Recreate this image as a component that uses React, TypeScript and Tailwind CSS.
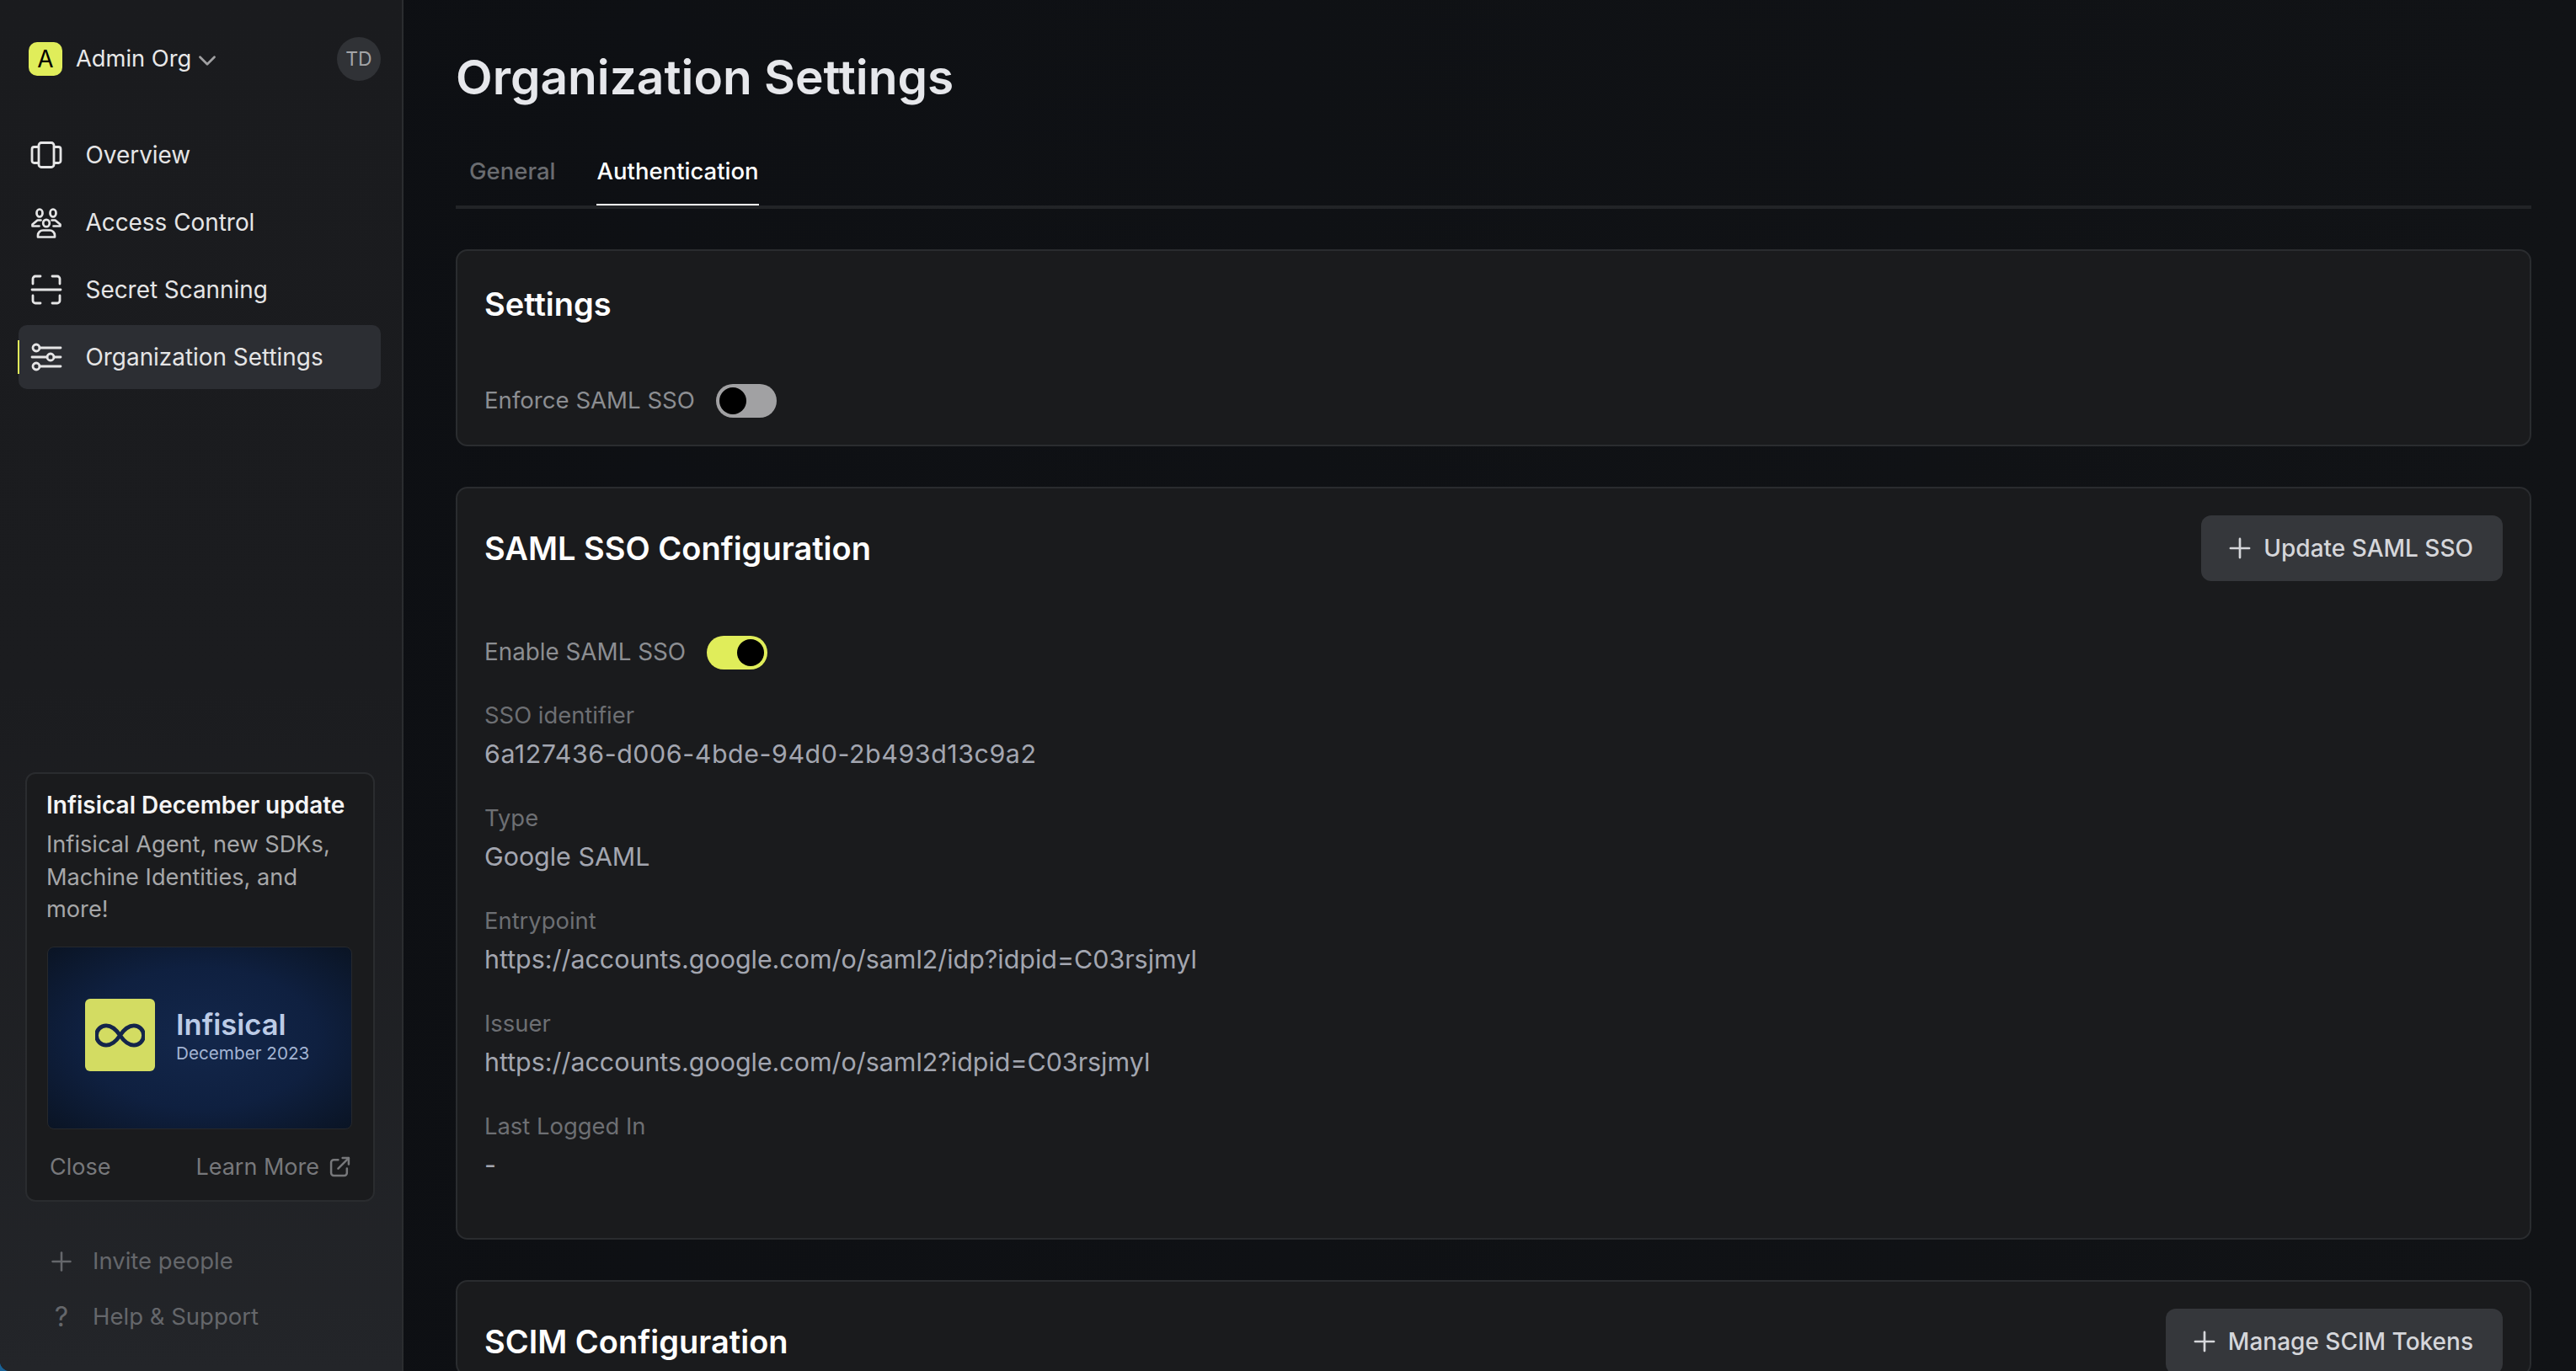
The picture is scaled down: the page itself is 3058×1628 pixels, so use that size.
import { Plus, ChevronDown } from "lucide-react";
import type { ReactNode } from "react";

function OverviewIcon() {
  return (
    <svg viewBox="0 0 38 38" className="w-[38px] h-[38px]" fill="none" stroke="currentColor" strokeWidth="2.800" strokeLinejoin="round">
      <rect x="10" y="4.500" width="18" height="29" rx="3" />
      <path d="M10 9.500H4.500a2.500 2.500 0 0 0-2.500 2.500v14a2.500 2.500 0 0 0 2.500 2.500H10" />
      <path d="M28 9.500h5.500a2.500 2.500 0 0 1 2.500 2.500v14a2.500 2.500 0 0 1-2.500 2.500H28" />
    </svg>
  );
}

function AccessIcon() {
  return (
    <svg viewBox="0 0 38 38" className="w-[38px] h-[38px]" fill="none" stroke="currentColor" strokeWidth="2.700" strokeLinejoin="round" strokeLinecap="round">
      <ellipse cx="11" cy="8" rx="3.500" ry="4.500" />
      <ellipse cx="27" cy="8" rx="3.500" ry="4.500" />
      <ellipse cx="19" cy="20" rx="3.800" ry="4.200" />
      <path d="M9 36.500v-2a6 6 0 0 1 6-6h8a6 6 0 0 1 6 6v2z" />
      <path d="M12.500 16.500H8.500L2.500 21.500V23.500H10.500" />
      <path d="M25.500 16.500H29.500L35.500 21.500V23.500H27.500" />
    </svg>
  );
}

function ScanIcon() {
  return (
    <svg viewBox="0 0 38 38" className="w-[38px] h-[38px]" fill="none" stroke="currentColor" strokeWidth="2.800" strokeLinecap="round">
      <path d="M3 12V6a3 3 0 0 1 3-3h6" />
      <path d="M26 3h6a3 3 0 0 1 3 3v6" />
      <path d="M3 26v6a3 3 0 0 0 3 3h6" />
      <path d="M26 35h6a3 3 0 0 0 3-3v-6" />
      <path d="M2 19h34" />
    </svg>
  );
}

function SlidersIcon() {
  return (
    <svg viewBox="0 0 38 38" className="w-[38px] h-[38px]" fill="none" stroke="currentColor" strokeWidth="2.800" strokeLinecap="round">
      <circle cx="7" cy="8" r="4" />
      <circle cx="24" cy="19" r="4" />
      <circle cx="7" cy="30" r="4" />
      <path d="M11 8h25M2 19h18M28 19h8M11 30h25" />
    </svg>
  );
}

function ExternalIcon() {
  return (
    <svg viewBox="0 0 24 24" className="w-[25px] h-[25px]" fill="none" stroke="currentColor" strokeWidth="2.400" strokeLinecap="round" strokeLinejoin="round">
      <path d="M10 4H5a3 3 0 0 0-3 3v12a3 3 0 0 0 3 3h12a3 3 0 0 0 3-3v-5" />
      <path d="M15 2h7v7" />
      <path d="M22 2L10 14" />
    </svg>
  );
}

function Toggle({ on }: { on: boolean }) {
  return (
    <div className={`w-[72px] h-[40px] rounded-full flex items-center px-[4px] ${on ? "bg-[#e0ed5a] justify-end" : "bg-[#a1a1a3] justify-start"}`}>
      <div className="w-[32px] h-[32px] rounded-full bg-black" />
    </div>
  );
}

function Field({ label, value, tracking }: { label: string; value: string; tracking?: string }) {
  return (
    <div>
      <div className="h-[40px] leading-[40px] text-[27.400px] text-[#6d6f73]">{label}</div>
      <div className={`mt-[6px] h-[40px] leading-[40px] text-[30.400px] text-[#a3a6b0] ${tracking ?? ""}`}>{value}</div>
    </div>
  );
}

function NavItem({ icon, label, active }: { icon: ReactNode; label: string; active?: boolean }) {
  return (
    <div className={`relative h-[76px] rounded-[10px] flex items-center pl-[14px] text-[#e5e5e6] ${active ? "bg-[#2c2e33]" : ""}`}>
      {active && <div className="absolute left-[-1px] top-[18px] w-[2px] h-[40px] bg-[#e0ed5a]" />}
      {icon}
      <span className="ml-[27.500px] mt-[1px] text-[27.900px]">{label}</span>
    </div>
  );
}

function ActionButton({ label }: { label: string }) {
  return (
    <div className="h-[78px] rounded-[12px] bg-[#35373b] flex items-center pl-[27px] pr-[35px] text-[#d5d6da] font-medium text-[28px]">
      <Plus size={38} strokeWidth={1.700} />
      <span className="ml-[9px]">{label}</span>
    </div>
  );
}

function Card({ children }: { children: ReactNode }) {
  return <div className="rounded-[14px] border-2 border-[#2a2c2f] bg-[#1a1b1d] px-[32px]">{children}</div>;
}

const fields = [
  { label: "SSO identifier", value: "6a127436-d006-4bde-94d0-2b493d13c9a2", tracking: "tracking-[0.550px]" },
  { label: "Type", value: "Google SAML" },
  { label: "Entrypoint", value: "https://accounts.google.com/o/saml2/idp?idpid=C03rsjmyl" },
  { label: "Issuer", value: "https://accounts.google.com/o/saml2?idpid=C03rsjmyl" },
  { label: "Last Logged In", value: "-" },
];

export default function App() {
  return (
    <div className="h-screen bg-[#1a6296] overflow-hidden font-['Inter',sans-serif]">
      <div className="h-full flex rounded-bl-[12px] overflow-hidden bg-gradient-to-r from-[#0d0f13] to-[#111316]">
        <aside className="w-[479px] shrink-0 border-r-2 border-[#2b2d30] bg-gradient-to-b from-[#1a1b1e] via-[#1b1c1f] to-[#232529] flex flex-col justify-between">
          <div>
            <div className="mt-[44px] h-[52px] pl-[34px] pr-[25px] flex items-center">
              <div className="w-[40px] h-[40px] rounded-[10px] bg-[#e0ed5a] flex items-center justify-center text-black text-[28px]">A</div>
              <span className="ml-[16px] text-[27.300px] text-[#e8e8e9]">Admin Org</span>
              <ChevronDown size={34} strokeWidth={1.900} className="ml-[2px] mt-[4px] text-[#a0a0a2]" />
              <div className="ml-auto w-[52px] h-[52px] rounded-full bg-[#303236] flex items-center justify-center text-[23px] text-[#a3a4a7]">TD</div>
            </div>
            <nav className="mt-[50px] ml-[22px] mr-[25px] flex flex-col gap-[4px]">
              <NavItem icon={<OverviewIcon />} label="Overview" />
              <NavItem icon={<AccessIcon />} label="Access Control" />
              <NavItem icon={<ScanIcon />} label="Secret Scanning" />
              <NavItem icon={<SlidersIcon />} label="Organization Settings" active />
            </nav>
          </div>
          <div className="pb-[44px]">
            <div className="mx-[30px] w-[415px] h-[510px] rounded-[12px] border-2 border-[#2a2c2f] bg-[#1a1b1d] pl-[23px] pr-[24px] pt-[20px] relative top-[-2px]">
              <div className="text-[28px] leading-[34px] font-semibold text-[#f4f4f5]">Infisical December update</div>
              <div className="mt-[11px] text-[27.200px] leading-[38.500px] text-[#a6a7a9]">Infisical Agent, new SDKs, Machine Identities, and more!</div>
              <div className="mt-[24px] ml-[1px] h-[217px] w-[362px] rounded-[8px] border border-[#26282c] bg-[radial-gradient(ellipse_at_center,#13274b_0%,#0f2040_55%,#0a1424_100%)] flex items-center pl-[44px] pb-[6px]">
                <div className="w-[83px] h-[86px] rounded-[6px] bg-[#d3dc62] flex items-center justify-center">
                  <svg viewBox="0 0 60 30" className="w-[59px] h-[29px]" fill="none" stroke="#14254a" strokeWidth="5">
                    <path d="M30 15C24 6 18 3 13 3a12 12 0 0 0 0 24c5 0 11-3 17-12s12-12 17-12a12 12 0 0 1 0 24c-5 0-11-3-17-12z" />
                  </svg>
                </div>
                <div className="ml-[25px]">
                  <div className="text-[34.500px] leading-[42px] font-semibold text-[#bccbe6]">Infisical</div>
                  <div className="text-[20.700px] leading-[25px] text-[#a3b4d3]">December 2023</div>
                </div>
              </div>
              <div className="mt-[25px] pl-[4px] pr-[3px] flex items-center justify-between text-[27px] text-[#77787b]">
                <span>Close</span>
                <span className="flex items-center gap-[12px]">Learn More <ExternalIcon /></span>
              </div>
            </div>
            <div className="mt-[49px] ml-[55px] h-[40px] flex items-center text-[27.500px] text-[#65676b]">
              <Plus size={36} strokeWidth={1.700} />
              <span className="ml-[19px]">Invite people</span>
            </div>
            <div className="mt-[26px] ml-[55px] h-[40px] flex items-center text-[27.500px] text-[#65676b]">
              <span className="w-[36px] text-center text-[32px]">?</span>
              <span className="ml-[19px]">Help &amp; Support</span>
            </div>
          </div>
        </aside>
        <main className="flex-1 min-w-0 pl-[62px] pr-[53px] overflow-hidden">
          <h1 className="mt-[56px] h-[72px] leading-[72px] text-[56.800px] font-semibold text-[#e6e7eb]">Organization Settings</h1>
          <div className="mt-[60px] border-b-[4px] border-[#222427] flex items-end pl-[16px] gap-[49px] text-[27.500px] leading-[30px] font-medium">
            <div className="h-[56px] text-[#6a6c70]">General</div>
            <div className="h-[56px] text-white border-b-2 border-white">Authentication</div>
          </div>
          <section className="mt-[48px]">
            <Card>
              <div className="pt-[43px] h-[83px] text-[38px] leading-[40px] font-semibold text-white">Settings</div>
              <div className="mt-[74px] mb-[32px] flex items-center gap-[25px] text-[27.600px] text-[#8c8e92]">
                Enforce SAML SSO <Toggle on={false} />
              </div>
            </Card>
          </section>
          <section className="mt-[48px]">
            <Card>
              <div className="pt-[32px] flex items-center justify-between">
                <span className="text-[38px] font-semibold text-white">SAML SSO Configuration</span>
                <ActionButton label="Update SAML SSO" />
              </div>
              <div className="mt-[64px] flex items-center gap-[25px] text-[27.800px] text-[#8c8e92]">
                Enable SAML SSO <Toggle on />
              </div>
              <div className="mt-[33px] pb-[67px] flex flex-col gap-[36px]">
                {fields.map((f) => (
                  <Field key={f.label} label={f.label} value={f.value} tracking={f.tracking} />
                ))}
              </div>
            </Card>
          </section>
          <section className="mt-[48px]">
            <Card>
              <div className="pt-[32px] flex items-center justify-between">
                <span className="text-[38px] font-semibold text-white">SCIM Configuration</span>
                <ActionButton label="Manage SCIM Tokens" />
              </div>
            </Card>
          </section>
        </main>
      </div>
    </div>
  );
}
